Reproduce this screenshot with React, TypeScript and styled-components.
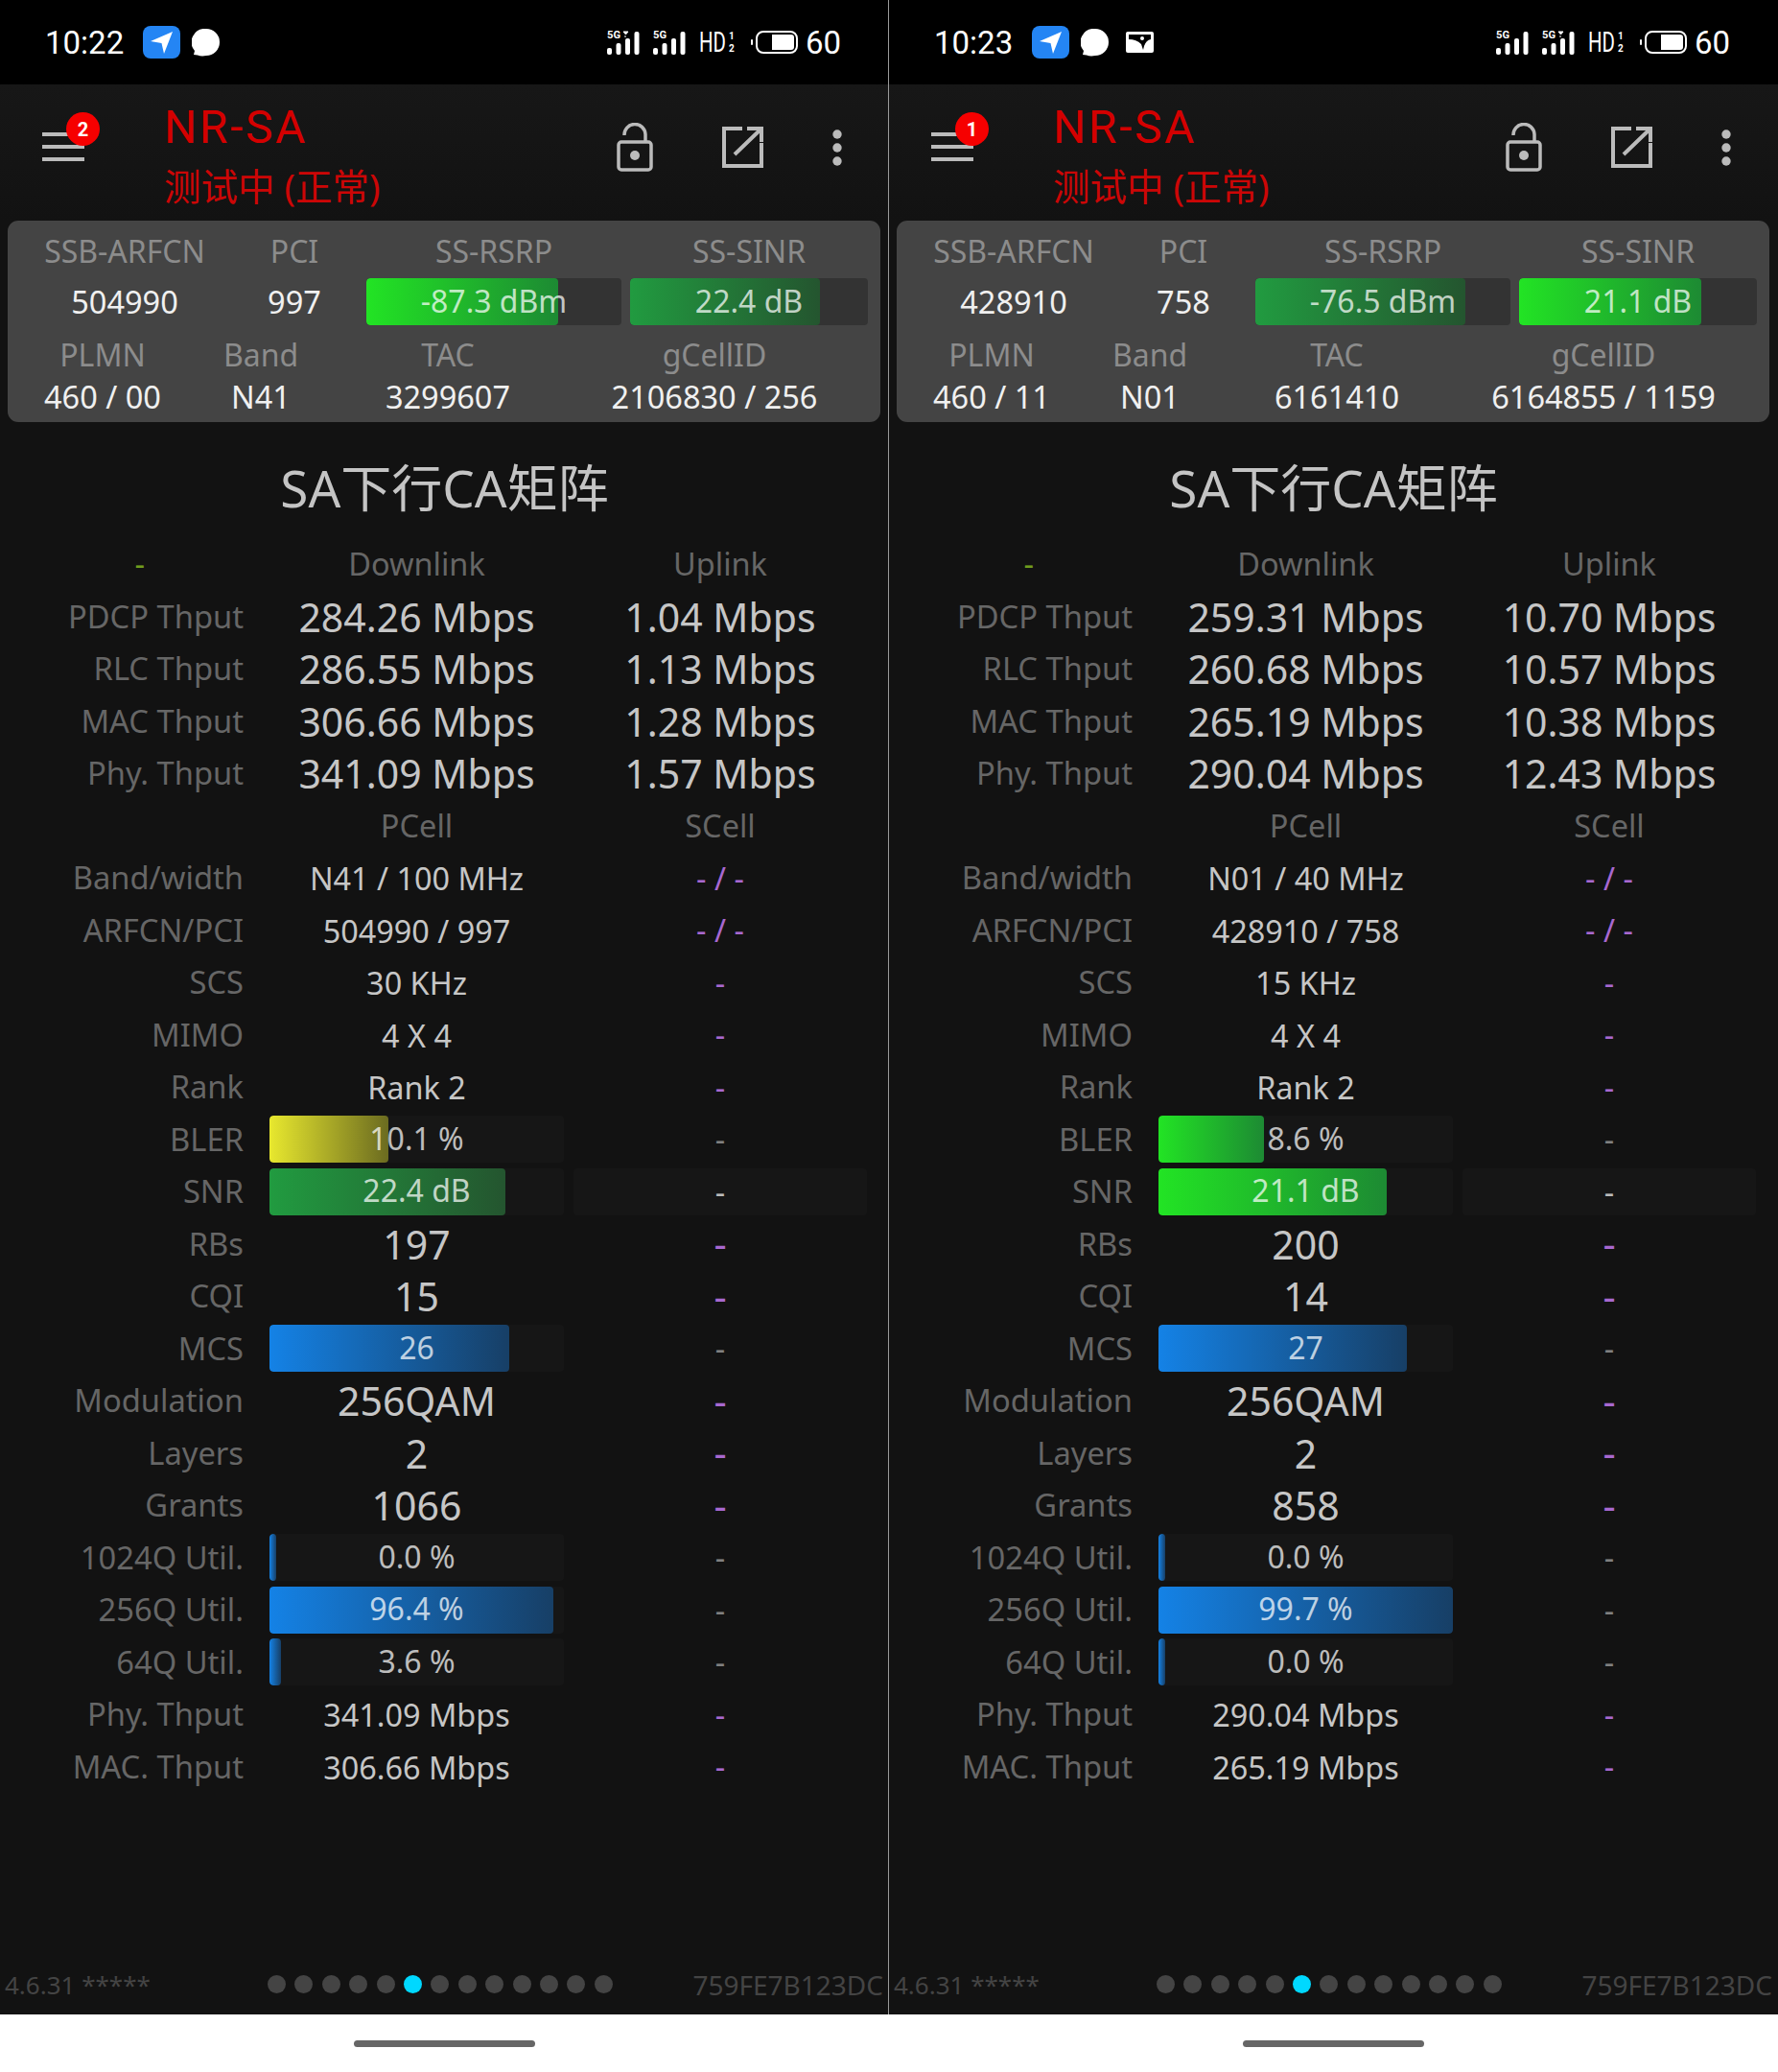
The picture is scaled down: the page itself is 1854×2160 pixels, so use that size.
import React, { ReactElement } from 'react';
import styled, { createGlobalStyle } from 'styled-components';

const UI_FONT = `'Noto Sans', 'Noto Sans CJK SC', sans-serif`;
const STATUS_FONT = `Roboto, 'Noto Sans', sans-serif`;

const TONES = {
  lime: 'linear-gradient(90deg, #22e424, #1d8a33)',
  green: 'linear-gradient(90deg, #219b40, #24552f)',
  yellow: 'linear-gradient(90deg, #e8e82e, #6b6b20)',
  blue: 'linear-gradient(90deg, #1482e6, #173f66)',
};

type Tone = keyof typeof TONES;
type Meter = { text: string; pct: number; tone: Tone };
type Size = 'lg' | 'md';

interface MatrixRowData {
  label: string;
  value?: string;
  meter?: Meter;
  size: Size;
  other: string;
  otherTone: 'purple' | 'grey' | 'light';
  otherTrack?: boolean;
  otherSize?: Size;
}

interface PhoneData {
  time: string;
  mail?: boolean;
  markFirst: boolean;
  badge: string;
  arfcn: string;
  pci: string;
  rsrp: Meter;
  sinr: Meter;
  plmn: string;
  band: string;
  tac: string;
  cellId: string;
  thput: [string, string][];
  bandWidth: string;
  arfcnPci: string;
  scs: string;
  bler: Meter;
  snr: Meter;
  rbs: string;
  cqi: string;
  mcs: Meter;
  grants: string;
  q1024: Meter;
  q256: Meter;
  q64: Meter;
}

const GlobalStyle = createGlobalStyle`
  html, body {
    margin: 0;
    background: #fff;
  }
  * {
    box-sizing: border-box;
  }
`;

const Page = styled.div`
  display: grid;
  grid-template-columns: 927px 927px;
  width: 1854px;
  height: 2160px;
  font-family: ${UI_FONT};
`;

const Phone = styled.div`
  display: flex;
  flex-direction: column;
`;

const Screen = styled.div<{ $divider: boolean }>`
  position: relative;
  display: flex;
  flex-direction: column;
  height: 2100px;
  background: #121212;

  &::after {
    content: '';
    display: ${(p) => (p.$divider ? 'block' : 'none')};
    position: absolute;
    top: 0;
    right: 0;
    bottom: 0;
    width: 1px;
    background: #9a9a9a;
  }
`;

const StatusBar = styled.div`
  display: flex;
  align-items: center;
  height: 88px;
  padding-left: 47px;
  background: #000;
  color: #fff;
  font-family: ${STATUS_FONT};
`;

const StatusText = styled.span`
  font-size: 33px;
  line-height: 1;
`;

const LocationBadge = styled.span`
  display: flex;
  align-items: center;
  justify-content: center;
  width: 39px;
  height: 34px;
  margin-left: 20px;
  border-radius: 8px;
  background: #2485f4;
`;

const Blob = styled.svg`
  margin-left: 12px;
`;

const MailIcon = styled.svg`
  margin-left: 18px;
`;

const StatusRight = styled.div`
  display: flex;
  align-items: center;
  margin-left: auto;
  padding-right: 50px;
`;

const HdIcon = styled.svg`
  margin-left: 13px;
  overflow: visible;
`;

const SignalIcon = styled.svg<{ $gap?: number }>`
  margin-left: ${(p) => p.$gap ?? 0}px;
  overflow: visible;
`;

const BatteryIcon = styled.svg`
  margin-left: 16px;
  margin-right: 8px;
`;

const AppBar = styled.div`
  display: flex;
  align-items: flex-start;
  height: 142px;
  padding-left: 44px;
  padding-right: 49px;
  background: linear-gradient(#171717, #121212);
`;

const Hamburger = styled.div`
  position: relative;
  display: flex;
  flex-direction: column;
  gap: 9px;
  width: 44px;
  margin-top: 50px;
`;

const HamburgerLine = styled.span`
  height: 4px;
  background: #bbb;
`;

const Badge = styled.span`
  position: absolute;
  left: 25px;
  top: -21px;
  display: flex;
  align-items: center;
  justify-content: center;
  width: 35px;
  height: 35px;
  border-radius: 50%;
  background: #f60000;
  color: #fff;
  font-family: ${STATUS_FONT};
  font-size: 20px;
  font-weight: 700;
`;

const TitleBlock = styled.div`
  margin-left: 83px;
  padding-top: 17px;
`;

const AppTitle = styled.div`
  color: #d40000;
  font-family: ${STATUS_FONT};
  font-size: 48px;
  line-height: 56px;
  letter-spacing: 2.6px;
`;

const AppSubtitle = styled.div`
  margin-top: 10px;
  color: #cc0606;
  font-size: 38.500px;
  line-height: 46px;
  white-space: nowrap;
`;

const ActionGroup = styled.div`
  display: flex;
  align-items: center;
  gap: 72px;
  height: 51px;
  margin-left: auto;
  margin-top: 40px;
`;

const Panel = styled.div`
  width: 910px;
  height: 210px;
  margin-left: 8px;
  border-radius: 11px;
  background: #444;
`;

const SignalGrid = styled.div`
  display: grid;
  grid-template-columns: 244px 110px 20px 266px 9px 248px;
  grid-template-rows: 60px 49px;
  align-items: center;
  text-align: center;
`;

const CellGrid = styled.div`
  display: grid;
  grid-template-columns: 198px 132px 258px 298px;
  grid-template-rows: 58px 34px;
  align-items: center;
  text-align: center;
`;

const PanelLabel = styled.div`
  padding-top: 4px;
  color: #8c8c8c;
  font-size: 32px;
  line-height: 36px;
`;

const PanelValue = styled.div`
  color: #f0f0f0;
  font-size: 32.500px;
  line-height: 36px;
  white-space: nowrap;
`;

const Spacer = styled.div``;

const PageTitle = styled.h1`
  height: 121px;
  margin: 0;
  padding-top: 39px;
  color: #c4c4c4;
  font-size: 53px;
  line-height: 60px;
  font-weight: 400;
  text-align: center;
`;

const Matrix = styled.div`
  display: grid;
  grid-auto-rows: 54.500px;
`;

const MatrixRow = styled.div`
  display: grid;
  grid-template-columns: 271px 307px 306px;
  column-gap: 10px;
  align-items: center;
  text-align: center;
`;

const RowLabel = styled.div`
  padding-right: 17px;
  color: #666;
  font-size: 32.700px;
  line-height: 36px;
  text-align: right;
  white-space: nowrap;
`;

const CornerMark = styled(RowLabel)`
  padding-right: 120px;
  color: #6f9c1e;
`;

const ColumnHead = styled.div`
  color: #666;
  font-size: 32.500px;
  line-height: 36px;
`;

const Value = styled.div<{ $size: Size }>`
  color: #c6c6c6;
  font-size: ${(p) => (p.$size === 'lg' ? 41 : 32.4)}px;
  line-height: 48px;
  white-space: nowrap;
`;

const OtherValue = styled(Value)<{ $tone: string; $track?: boolean }>`
  height: 49px;
  border-radius: 4px;
  background: ${(p) => (p.$track ? '#161616' : 'transparent')};
  color: ${(p) => (p.$tone === 'purple' ? '#a868d0' : p.$tone === 'light' ? '#bbb' : '#808080')};
`;

const Track = styled.div<{ $panel?: boolean }>`
  position: relative;
  display: flex;
  align-items: center;
  justify-content: center;
  height: 49px;
  overflow: hidden;
  border-radius: 4px;
  background: ${(p) => (p.$panel ? '#333' : '#161616')};
`;

const TrackFill = styled.div<{ $tone: Tone }>`
  position: absolute;
  left: 0;
  top: 0;
  bottom: 0;
  border-radius: 4px;
  background: ${(p) => TONES[p.$tone]};
`;

const TrackText = styled.span`
  position: relative;
  top: -1px;
  color: rgba(255, 255, 255, 0.72);
  font-size: 32px;
  line-height: 36px;
  white-space: nowrap;
`;

const Footer = styled.div`
  display: grid;
  grid-template-columns: 274px auto 1fr;
  align-items: center;
  height: 60px;
  margin-top: auto;
  padding: 0 6px 4px 5px;
`;

const FooterText = styled.div<{ $end?: boolean }>`
  padding-top: 2px;
  color: #444;
  font-size: ${(p) => (p.$end ? 28 : 26)}px;
  line-height: 32px;
  text-align: ${(p) => (p.$end ? 'right' : 'left')};
  white-space: nowrap;
`;

const Dots = styled.div`
  display: flex;
  gap: 9.400px;
`;

const Dot = styled.span<{ $active: boolean }>`
  width: 19px;
  height: 19px;
  border-radius: 50%;
  background: ${(p) => (p.$active ? '#00d8ff' : '#444')};
`;

const NavArea = styled.div`
  display: flex;
  justify-content: center;
  padding-top: 27px;
`;

const HomeBar = styled.span`
  width: 189px;
  height: 7px;
  border-radius: 4px;
  background: #666;
`;

const Signal = ({ mark, gap }: { mark: boolean; gap?: number }): ReactElement => (
  <SignalIcon $gap={gap} width="35" height="25" viewBox="0 0 35 25" fill="#fff">
    <text x="0" y="8" fontFamily="Roboto, sans-serif" fontSize="11" fontWeight="700" textLength="14" lengthAdjust="spacingAndGlyphs">
      5G
    </text>
    {mark && <path d="M17 1h5l-2.500 3zM19 5v2" stroke="#fff" strokeWidth="1" />}
    <rect x="0" y="18" width="5" height="7" rx="2" />
    <rect x="9.500" y="13" width="5" height="12" rx="2" />
    <rect x="19" y="8" width="5" height="17" rx="2" />
    <rect x="28.500" y="1" width="5" height="24" rx="2" />
  </SignalIcon>
);

const meterRow = (label: string, meter: Meter, otherTrack?: boolean): MatrixRowData => ({
  label,
  meter,
  size: 'md',
  other: '-',
  otherTone: otherTrack ? 'light' : 'grey',
  otherTrack,
  otherSize: 'md',
});

const buildRows = (d: PhoneData): MatrixRowData[] => [
  { label: 'Band/width', value: d.bandWidth, size: 'md', other: '- / -', otherTone: 'purple', otherSize: 'md' },
  { label: 'ARFCN/PCI', value: d.arfcnPci, size: 'md', other: '- / -', otherTone: 'purple', otherSize: 'md' },
  { label: 'SCS', value: d.scs, size: 'md', other: '-', otherTone: 'purple', otherSize: 'md' },
  { label: 'MIMO', value: '4 X 4', size: 'md', other: '-', otherTone: 'purple', otherSize: 'md' },
  { label: 'Rank', value: 'Rank 2', size: 'md', other: '-', otherTone: 'purple', otherSize: 'md' },
  meterRow('BLER', d.bler),
  meterRow('SNR', d.snr, true),
  { label: 'RBs', value: d.rbs, size: 'lg', other: '-', otherTone: 'purple', otherSize: 'lg' },
  { label: 'CQI', value: d.cqi, size: 'lg', other: '-', otherTone: 'purple', otherSize: 'lg' },
  meterRow('MCS', d.mcs),
  { label: 'Modulation', value: '256QAM', size: 'lg', other: '-', otherTone: 'purple', otherSize: 'lg' },
  { label: 'Layers', value: '2', size: 'lg', other: '-', otherTone: 'purple', otherSize: 'lg' },
  { label: 'Grants', value: d.grants, size: 'lg', other: '-', otherTone: 'purple', otherSize: 'lg' },
  meterRow('1024Q Util.', d.q1024),
  meterRow('256Q Util.', d.q256),
  meterRow('64Q Util.', d.q64),
  { label: 'Phy. Thput', value: d.thput[3][0], size: 'md', other: '-', otherTone: 'purple', otherSize: 'md' },
  { label: 'MAC. Thput', value: d.thput[2][0], size: 'md', other: '-', otherTone: 'purple', otherSize: 'md' },
];

const THPUT_LABELS = ['PDCP Thput', 'RLC Thput', 'MAC Thput', 'Phy. Thput'];

const MeterBar = ({ meter, panel }: { meter: Meter; panel?: boolean }): ReactElement => (
  <Track $panel={panel}>
    <TrackFill $tone={meter.tone} style={{ width: `${meter.pct}%` }} />
    <TrackText>{meter.text}</TrackText>
  </Track>
);

const PhoneView = ({ data, divider }: { data: PhoneData; divider: boolean }): ReactElement => (
  <Phone>
    <Screen $divider={divider}>
      <StatusBar>
        <StatusText>{data.time}</StatusText>
        <LocationBadge>
          <svg width="26" height="26" viewBox="0 0 26 26" fill="#fff">
            <path d="M1 12 24 2 15 25 12.500 14z" />
          </svg>
        </LocationBadge>
        <Blob width="29" height="29" viewBox="0 0 29 29" fill="#fff">
          <path d="M15 0a14 14 0 0 1 0 28q-5 1-9-.500L2 27l1-4A14 14 0 0 1 15 0z" />
        </Blob>
        {data.mail && (
          <MailIcon width="29" height="22" viewBox="0 0 29 22">
            <rect width="29" height="22" rx="2" fill="#fff" />
            <path d="M3 3h23v5q-5 1-7 7l-1 4-2-6Q11 8 3 8z" fill="#000" />
            <circle cx="17" cy="7" r="2" fill="#fff" />
          </MailIcon>
        )}
        <StatusRight>
          <Signal mark={data.markFirst} />
          <Signal mark={!data.markFirst} gap={13} />
          <HdIcon width="38" height="24" viewBox="0 0 38 24" fill="#fff">
            <text x="0" y="22" fontFamily="Roboto, sans-serif" fontSize="29" textLength="28" lengthAdjust="spacingAndGlyphs">
              HD
            </text>
            <text x="31" y="9" fontFamily="Roboto, sans-serif" fontSize="10" fontWeight="700">
              1
            </text>
            <text x="31" y="22" fontFamily="Roboto, sans-serif" fontSize="10" fontWeight="700">
              2
            </text>
          </HdIcon>
          <BatteryIcon width="49" height="24" viewBox="0 0 49 24">
            <rect x="0" y="9" width="2" height="6" rx="1" fill="#fff" />
            <rect x="6" y="1" width="42" height="22" rx="7" fill="none" stroke="#fff" strokeWidth="2" />
            <path d="M22 4h20a3 3 0 0 1 3 3v10a3 3 0 0 1-3 3H22z" fill="#fff" />
          </BatteryIcon>
          <StatusText>60</StatusText>
        </StatusRight>
      </StatusBar>

      <AppBar>
        <Hamburger>
          <HamburgerLine />
          <HamburgerLine />
          <HamburgerLine />
          <Badge>{data.badge}</Badge>
        </Hamburger>
        <TitleBlock>
          <AppTitle>NR-SA</AppTitle>
          <AppSubtitle>测试中 (正常)</AppSubtitle>
        </TitleBlock>
        <ActionGroup>
          <svg width="38" height="51" viewBox="0 0 38 51" fill="none" stroke="#bbb" strokeWidth="3.500">
            <rect x="2" y="20" width="34" height="29" rx="3" />
            <path d="M8 13A11 11 0 0 1 30 12v7" />
            <circle cx="19" cy="34" r="5" fill="#bbb" stroke="none" />
          </svg>
          <svg width="43" height="43" viewBox="0 0 43 43" fill="none" stroke="#bbb" strokeWidth="4">
            <path d="M21 2H2v39h39V17" />
            <path d="M26 2h15v14M39 4 13 29" />
          </svg>
          <svg width="10" height="38" viewBox="0 0 10 38" fill="#bbb">
            <circle cx="5" cy="5" r="4.700" />
            <circle cx="5" cy="19" r="4.700" />
            <circle cx="5" cy="33" r="4.700" />
          </svg>
        </ActionGroup>
      </AppBar>

      <Panel>
        <SignalGrid>
          <PanelLabel>SSB-ARFCN</PanelLabel>
          <PanelLabel>PCI</PanelLabel>
          <Spacer />
          <PanelLabel>SS-RSRP</PanelLabel>
          <Spacer />
          <PanelLabel>SS-SINR</PanelLabel>
          <PanelValue>{data.arfcn}</PanelValue>
          <PanelValue>{data.pci}</PanelValue>
          <Spacer />
          <MeterBar meter={data.rsrp} panel />
          <Spacer />
          <MeterBar meter={data.sinr} panel />
        </SignalGrid>
        <CellGrid>
          <PanelLabel>PLMN</PanelLabel>
          <PanelLabel>Band</PanelLabel>
          <PanelLabel>TAC</PanelLabel>
          <PanelLabel>gCellID</PanelLabel>
          <PanelValue>{data.plmn}</PanelValue>
          <PanelValue>{data.band}</PanelValue>
          <PanelValue>{data.tac}</PanelValue>
          <PanelValue>{data.cellId}</PanelValue>
        </CellGrid>
      </Panel>

      <PageTitle>SA下行CA矩阵</PageTitle>

      <Matrix>
        <MatrixRow>
          <CornerMark>-</CornerMark>
          <ColumnHead>Downlink</ColumnHead>
          <ColumnHead>Uplink</ColumnHead>
        </MatrixRow>
        {data.thput.map(([down, up], i) => (
          <MatrixRow key={THPUT_LABELS[i]}>
            <RowLabel>{THPUT_LABELS[i]}</RowLabel>
            <Value $size="lg">{down}</Value>
            <Value $size="lg">{up}</Value>
          </MatrixRow>
        ))}
        <MatrixRow>
          <RowLabel />
          <ColumnHead>PCell</ColumnHead>
          <ColumnHead>SCell</ColumnHead>
        </MatrixRow>
        {buildRows(data).map((row) => (
          <MatrixRow key={row.label}>
            <RowLabel>{row.label}</RowLabel>
            {row.meter ? <MeterBar meter={row.meter} /> : <Value $size={row.size}>{row.value}</Value>}
            <OtherValue $size={row.otherSize ?? 'md'} $tone={row.otherTone} $track={row.otherTrack}>
              {row.other}
            </OtherValue>
          </MatrixRow>
        ))}
      </Matrix>

      <Footer>
        <FooterText>4.6.31 *****</FooterText>
        <Dots>
          {Array.from({ length: 13 }, (_, i) => (
            <Dot key={i} $active={i === 5} />
          ))}
        </Dots>
        <FooterText $end>759FE7B123DC</FooterText>
      </Footer>
    </Screen>
    <NavArea>
      <HomeBar />
    </NavArea>
  </Phone>
);

const LEFT: PhoneData = {
  time: '10:22',
  markFirst: true,
  badge: '2',
  arfcn: '504990',
  pci: '997',
  rsrp: { text: '-87.3 dBm', pct: 75.2, tone: 'lime' },
  sinr: { text: '22.4 dB', pct: 79.8, tone: 'green' },
  plmn: '460 / 00',
  band: 'N41',
  tac: '3299607',
  cellId: '2106830 / 256',
  thput: [
    ['284.26 Mbps', '1.04 Mbps'],
    ['286.55 Mbps', '1.13 Mbps'],
    ['306.66 Mbps', '1.28 Mbps'],
    ['341.09 Mbps', '1.57 Mbps'],
  ],
  bandWidth: 'N41 / 100 MHz',
  arfcnPci: '504990 / 997',
  scs: '30 KHz',
  bler: { text: '10.1 %', pct: 40.4, tone: 'yellow' },
  snr: { text: '22.4 dB', pct: 80.1, tone: 'green' },
  rbs: '197',
  cqi: '15',
  mcs: { text: '26', pct: 81.4, tone: 'blue' },
  grants: '1066',
  q1024: { text: '0.0 %', pct: 2.3, tone: 'blue' },
  q256: { text: '96.4 %', pct: 96.4, tone: 'blue' },
  q64: { text: '3.6 %', pct: 3.9, tone: 'blue' },
};

const RIGHT: PhoneData = {
  time: '10:23',
  mail: true,
  markFirst: false,
  badge: '1',
  arfcn: '428910',
  pci: '758',
  rsrp: { text: '-76.5 dBm', pct: 82.3, tone: 'green' },
  sinr: { text: '21.1 dB', pct: 76.6, tone: 'lime' },
  plmn: '460 / 11',
  band: 'N01',
  tac: '6161410',
  cellId: '6164855 / 1159',
  thput: [
    ['259.31 Mbps', '10.70 Mbps'],
    ['260.68 Mbps', '10.57 Mbps'],
    ['265.19 Mbps', '10.38 Mbps'],
    ['290.04 Mbps', '12.43 Mbps'],
  ],
  bandWidth: 'N01 / 40 MHz',
  arfcnPci: '428910 / 758',
  scs: '15 KHz',
  bler: { text: '8.6 %', pct: 35.8, tone: 'lime' },
  snr: { text: '21.1 dB', pct: 77.5, tone: 'lime' },
  rbs: '200',
  cqi: '14',
  mcs: { text: '27', pct: 84.4, tone: 'blue' },
  grants: '858',
  q1024: { text: '0.0 %', pct: 2.3, tone: 'blue' },
  q256: { text: '99.7 %', pct: 100, tone: 'blue' },
  q64: { text: '0.0 %', pct: 2.3, tone: 'blue' },
};

const App = (): ReactElement => (
  <Page>
    <GlobalStyle />
    <PhoneView data={LEFT} divider />
    <PhoneView data={RIGHT} divider={false} />
  </Page>
);

export default App;
